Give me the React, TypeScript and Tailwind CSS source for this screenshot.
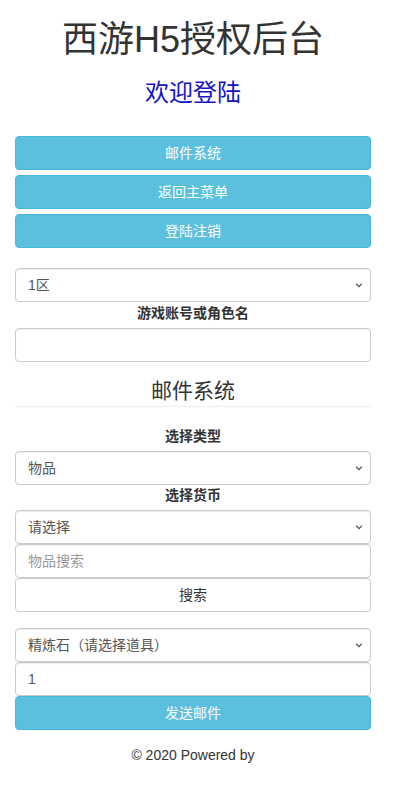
import React from "react";

const font = { fontFamily: '"Liberation Sans", "Noto Sans CJK SC", sans-serif' };

const Chevron = () => (
  <svg
    className="pointer-events-none absolute right-[8px] top-1/2 -translate-y-1/2 h-[8px] w-[8px] text-[#555]"
    viewBox="0 0 10 10"
    fill="none"
    stroke="currentColor"
    strokeWidth="1.6"
  >
    <path d="M1.5 3.5 5 7l3.5-3.5" />
  </svg>
);

const Select = ({ value }: { value: string }) => (
  <div className="relative">
    <div className="h-[34px] w-full rounded-[4px] border border-[#ccc] bg-white pl-[12px] flex items-center text-[14px] text-[#555] shadow-[inset_0_1px_1px_rgba(0,0,0,0.075)]">
      {value}
    </div>
    <Chevron />
  </div>
);

const Input = ({ value, placeholder }: { value?: string; placeholder?: string }) => (
  <div className="h-[34px] w-full rounded-[4px] border border-[#ccc] bg-white px-[12px] flex items-center text-[14px] shadow-[inset_0_1px_1px_rgba(0,0,0,0.075)]">
    {value ? (
      <span className="text-[#555]">{value}</span>
    ) : (
      <span className="text-[#999]">{placeholder}</span>
    )}
  </div>
);

const InfoButton = ({ label }: { label: string }) => (
  <button
    type="button"
    className="h-[34px] w-full rounded-[4px] border border-[#46b8da] bg-[#5bc0de] text-[14px] text-white"
  >
    {label}
  </button>
);

const Label = ({ text }: { text: string }) => (
  <div className="h-[20px] leading-[20px] mb-[5px] text-center text-[14px] font-bold text-[#333]">
    {text}
  </div>
);

export default function App() {
  return (
    <div className="w-[386px] bg-white px-[15px] text-[#333]" style={font}>
      <h1 className="pt-[20px] text-center text-[36px] leading-[40px]">西游H5授权后台</h1>
      <h2 className="mt-[20px] text-center text-[24px] leading-[26px] text-[#1414c4]">欢迎登陆</h2>

      <div className="mt-[30px] flex flex-col gap-[5px]">
        <InfoButton label="邮件系统" />
        <InfoButton label="返回主菜单" />
        <InfoButton label="登陆注销" />
      </div>

      <div className="mt-[20px]">
        <Select value="1区" />
        <div className="mt-[1px]">
          <Label text="游戏账号或角色名" />
        </div>
        <Input />
      </div>

      <h3 className="mt-[17px] text-center text-[21px] leading-[24px]">邮件系统</h3>
      <hr className="mt-[3px] border-0 border-t border-[#eee]" />

      <div className="mt-[19px]">
        <Label text="选择类型" />
        <Select value="物品" />
        <Label text="选择货币" />
        <Select value="请选择" />
        <Input placeholder="物品搜索" />
        <button
          type="button"
          className="h-[34px] w-full rounded-[4px] border border-[#ccc] bg-white text-[14px] text-[#333]"
        >
          搜索
        </button>
      </div>

      <div className="mt-[16px]">
        <Select value="精炼石（请选择道具）" />
        <Input value="1" />
        <InfoButton label="发送邮件" />
      </div>

      <footer className="mt-[15px] h-[20px] leading-[20px] text-center text-[14px] text-[#333]">
        © 2020 Powered by
      </footer>
      <div className="h-[43px]" />
    </div>
  );
}
